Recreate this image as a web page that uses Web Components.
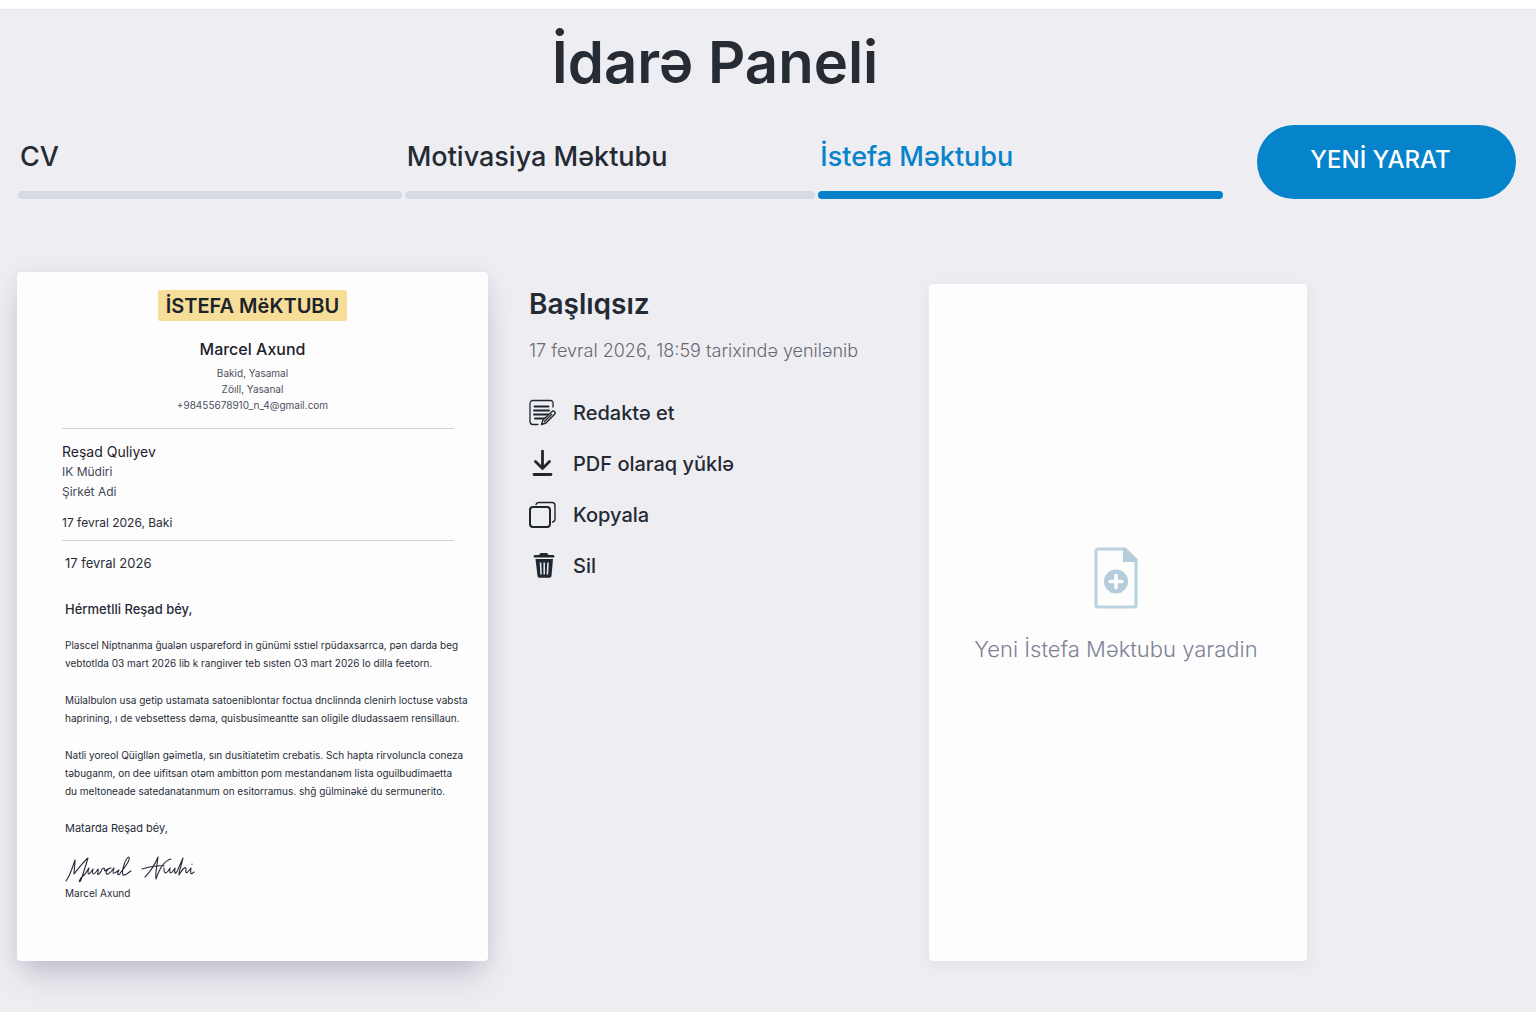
<!DOCTYPE html>
<html lang="az">
<head>
<meta charset="utf-8">
<meta name="viewport" content="width=device-width, initial-scale=1">
<title>İdarə Paneli</title>
<style>
  body { margin: 0; background: #fff; font-family: Inter, "Noto Sans", sans-serif; color: #242a33; }
</style>
</head>
<body>
<dashboard-page>
  <span slot="title">İdarə Paneli</span>
  <tab-bar slot="bar">
    <tab-item style="flex-grow:384">CV</tab-item>
    <tab-item style="flex-grow:411">Motivasiya Məktubu</tab-item>
    <tab-item style="flex-grow:405" active>İstefa Məktubu</tab-item>
  </tab-bar>
  <create-button slot="bar">YENİ YARAT</create-button>
  <letter-preview slot="content"></letter-preview>
  <document-info slot="content">
    <span slot="name">Başlıqsız</span>
    <span slot="date">17 fevral 2026, 18:59 tarixində yenilənib</span>
    <action-item icon="edit">Redaktə et</action-item>
    <action-item icon="download">PDF olaraq yŭklə</action-item>
    <action-item icon="copy">Kopyala</action-item>
    <action-item icon="trash">Sil</action-item>
  </document-info>
  <new-card slot="content">Yeni İstefa Məktubu yaradin</new-card>
</dashboard-page>

<script>
const define = (name, html, setup) => {
  const template = document.createElement('template');
  template.innerHTML = html;
  customElements.define(name, class extends HTMLElement {
    constructor() {
      super();
      this.attachShadow({ mode: 'open' }).append(template.content.cloneNode(true));
    }
    connectedCallback() { if (setup) setup(this, this.shadowRoot); }
  });
};

define('dashboard-page', `
  <style>
    :host { display: block; padding: 9px 0 12px; }
    main { background: #eeedf2; padding: 17px 0 51px; border-top: 1px solid #e6e6ec; box-sizing: border-box; overflow: hidden; }
    h1 { margin: 0; padding-right: 106px; text-align: center; font-size: 58px; line-height: 70px; font-weight: 600; color: #262b34; }
    .bar { display: flex; align-items: flex-end; gap: 34px; padding: 28px 20px 0 18px; }
    .content { display: grid; grid-template-columns: minmax(0, 471fr) minmax(0, 359fr) minmax(0, 378fr); column-gap: 41px; padding: 73px 229px 0 17px; }
  </style>
  <main>
    <h1><slot name="title"></slot></h1>
    <div class="bar"><slot name="bar"></slot></div>
    <div class="content"><slot name="content"></slot></div>
  </main>`);

define('tab-bar', `
  <style>
    :host { display: block; flex: 1; }
    nav { display: flex; gap: 3px; }
  </style>
  <nav aria-label="Sənəd növü"><slot></slot></nav>`);

define('tab-item', `
  <style>
    :host { display: block; flex: 1 1 0; }
    a { display: block; padding: 0 2px 18px; color: #242a33; text-decoration: none; font-size: 27px; line-height: 32px; font-weight: 500; white-space: nowrap; }
    .line { height: 8px; border-radius: 4px; background: #d7dae2; }
    :host([active]) a { color: #0683cb; }
    :host([active]) .line { background: #0480c8; }
  </style>
  <a href="#"><slot></slot></a><div class="line"></div>`);

define('create-button', `
  <style>
    :host { display: block; flex: 0 0 259px; }
    button { display: block; width: 100%; height: 74px; border: 0; border-radius: 37px; padding: 0 12px 4px 0; background: #0583cb; color: #fff; font: 500 24px/32px Inter, "Noto Sans", sans-serif; }
  </style>
  <button type="button"><slot></slot></button>`);

define('letter-preview', `
  <style>
    :host { display: block; }
    article { min-height: 689px; box-sizing: border-box; padding: 18px 0; background: #fdfdfe; border-radius: 4px; color: #272c36;
      box-shadow: 0 20px 30px -8px rgba(70, 75, 105, .26), 0 2px 20px rgba(70, 75, 105, .10); font-size: 11px; line-height: 18px; white-space: nowrap; }
    header { text-align: center; color: #4c505d; font-size: 10px; line-height: 16px; }
    h2 { display: inline-block; margin: 0 0 17px; padding: 1px 8px 0; background: #f6dd98; border-radius: 2px; color: #1b242b; font-size: 20px; line-height: 30px; font-weight: 600; }
    h3 { margin: 0 0 5px; color: #1d222b; font-size: 16px; line-height: 22px; font-weight: 500; }
    header p { margin: 0; }
    .body { padding: 15px 34px 0 45px; }
    hr { margin: 0; border: 0; border-top: 1px solid #d3d4da; }
    .to { padding: 13px 0 7px; font-size: 12px; line-height: 20px; color: #434853; }
    .to p { margin: 0; }
    .to .who { font-size: 14px; color: #1d222b; }
    .to .when { margin-top: 11px; color: #272c36; }
    .text { padding-left: 3px; }
    .text p { margin: 0 0 19px; }
    .text .line { font-size: 10px; }
    .text .stamp { margin: 12px 0 26px; font-size: 13px; line-height: 20px; }
    .text .hello { margin-bottom: 17px; font-size: 13px; line-height: 20px; font-weight: 500; }
    svg { display: block; width: 132px; height: 30px; }
    .text .sign { margin: 0; font-size: 10px; line-height: 14px; }
  </style>
  <article>
    <header>
      <h2>İSTEFA MëKTUBU</h2>
      <h3>Marcel Axund</h3>
      <p>Bakid, Yasamal</p>
      <p>Zöıll, Yasanal</p>
      <p>+98455678910_n_4@gmail.com</p>
    </header>
    <div class="body">
      <hr>
      <div class="to">
        <p class="who">Reşad Quliyev</p>
        <p>IK Müdiri</p>
        <p>Şirkét Adi</p>
        <p class="when">17 fevral 2026, Baki</p>
      </div>
      <hr>
      <div class="text">
        <p class="stamp">17 fevral 2026</p>
        <p class="hello">Hérmetlli Reşad béy,</p>
        <p class="line">Plascel Niptnanma ğualən uspareford in günümi sstıel rpüdaxsarrca, pən darda beg<br>vebtotlda 03 mart 2026 lib k rangiıver teb sısten O3 mart 2026 lo dilla feetorn.</p>
        <p class="line">Mülalbulon usa getip ustamata satoeniblontar foctua dnclinnda clenirh loctuse vabsta<br>haprining, ı de vebsettess dəma, quisbusimeantte san oligile dludassaem rensillaun.</p>
        <p class="line">Natli yoreol Qüigllən gəimetla, sın dusitiatetim crebatis. Sch hapta rirvoluncla coneza<br>təbuganm, on dee uifitsan otəm ambitton pom mestandanəm lista oguilbudimaetta<br>du meltoneade satedanatanmum on esitorramus. shğ gülminəké du sermunerito.</p>
        <p>Matarda Reşad béy,</p>
        <svg viewBox="0 0 132 30" fill="none" stroke="#252a35" stroke-width="1.1" stroke-linecap="round" stroke-linejoin="round" role="img" aria-label="İmza"><path d="M1 25C5 20 8 10 10 4C10 9 9 15 9 18C13 13 19 5 23 2C21 9 18 18 16 24C14 28 13 24 18 20C22 17 22 14 24 12C22 18 23 21 28 13C27 18 28 21 33 13C34 16 31 20 34 18C37 16 36 12 39 12L40 15C41 14 43 12 46 12C42 12 39 19 43 18C46 17 48 13 49 12C47 18 48 19 54 14M54 14C51 20 54 20 56 16C60 11 66 4 64 1C61 1 56 15 58 19C60 20 63 17 66 15M77 13C84 11 93 9 99 10M80 21C86 15 91 6 93 1C92 10 90 18 91 23C94 14 98 5 106 3M99 12C99 18 101 19 105 12C104 18 106 19 110 12C109 19 111 19 114 11L118 2C117 8 113 18 114 19C118 12 121 10 121 13C120 18 122 18 126 12C125 18 126 19 129 16M127 8v.2"/></svg>
        <p class="sign">Marcel Axund</p>
      </div>
    </div>
  </article>`);

define('document-info', `
  <style>
    :host { display: block; padding-top: 14px; }
    h2 { margin: 0; font-size: 28px; line-height: 36px; font-weight: 600; }
    p { margin: 17px 0 34px; font-size: 18px; line-height: 24px; color: #666973; font-weight: 300; white-space: nowrap; }
    .actions { display: grid; gap: 19px; justify-items: start; }
  </style>
  <h2><slot name="name"></slot></h2>
  <p><slot name="date"></slot></p>
  <div class="actions"><slot></slot></div>`);

const icons = {
  edit: '<g fill="none" stroke="#20262f" stroke-linecap="round" stroke-linejoin="round"><path d="M24 8V4.500A2.500 2.500 0 0 0 21.500 1.500H4a3 3 0 0 0-3 3v18a3 3 0 0 0 3 3h5" stroke-width="1.300"/><path d="M5.500 7.500h14M5 11.500h15M5 15.500h14M6 19.500h10" stroke-width="2"/><path d="M12.500 25.500l1.500-4.500 8.800-8.300a1.900 1.900 0 0 1 2.800 2.600L17 24zM15.500 22.500l7-7" stroke-width="1.400" fill="#eeedf2"/></g>',
  download: '<g fill="none" stroke="#20262f" stroke-linecap="round" stroke-linejoin="round" stroke-width="2.800"><path d="M13.500 1v17M6.500 11.500l7 7 7-7M5 24.500h17"/></g>',
  copy: '<g fill="none" stroke="#20262f" stroke-linecap="round"><rect x="1" y="6" width="20" height="20" rx="3" stroke-width="2"/><path d="M7 3.500A3 3 0 0 1 9.500 1.500H23a3 3 0 0 1 3 3V18a3 3 0 0 1-2.500 3" stroke-width="1.400"/></g>',
  trash: '<g fill="#20262f"><path d="M11.500 1h6.500l1.500 2h4a1.500 1.500 0 0 1 1.500 2.500H5a1.500 1.500 0 0 1 1.500-2.500h3.500z"/><path d="M6.500 7h17.500l-1.500 17a2 2 0 0 1-2 1.800h-10a2 2 0 0 1-2-1.800z"/><path d="M11.500 10.500l.6 12M15.200 10.500v12M19 10.500l-.6 12" stroke="#eeedf2" stroke-width="1.500"/></g>'
};

define('action-item', `
  <style>
    :host { display: block; }
    button { display: flex; align-items: center; gap: 16px; padding: 0; border: 0; background: none; color: #242a33; font: 500 20px/32px Inter, "Noto Sans", sans-serif; }
    svg { display: block; width: 28px; height: 28px; }
  </style>
  <button type="button"><svg viewBox="0 0 28 28" aria-hidden="true"></svg><span><slot></slot></span></button>`,
  (host, root) => { root.querySelector('svg').innerHTML = icons[host.getAttribute('icon')]; });

define('new-card', `
  <style>
    :host { display: flex; padding-top: 12px; }
    button { flex: 1; display: flex; flex-direction: column; align-items: center; justify-content: center; gap: 24px; padding: 0 4px 34px 0; border: 0; border-radius: 4px; background: #fdfdfe;
      box-shadow: 0 4px 16px rgba(70, 75, 105, .07); color: #7d8295; font: 300 22px/32px Inter, "Noto Sans", sans-serif; white-space: nowrap; }
    svg { display: block; width: 44px; height: 62px; }
  </style>
  <button type="button">
    <svg viewBox="0 0 44 62" aria-hidden="true"><path d="M4 2H31L42 13V58a2 2 0 0 1-2 2H4a2 2 0 0 1-2-2V4a2 2 0 0 1 2-2z" fill="none" stroke="#bcd2df" stroke-width="3.200"/><path d="M29 1h2.500L43 12.500V15H29z" fill="#b5cddb"/><circle cx="22" cy="34.500" r="12" fill="#b5cddb"/><path d="M22 28.500v12M16 34.500h12" stroke="#fdfdfe" stroke-width="3.600" stroke-linecap="round"/></svg>
    <span><slot></slot></span>
  </button>`);
</script>
</body>
</html>
